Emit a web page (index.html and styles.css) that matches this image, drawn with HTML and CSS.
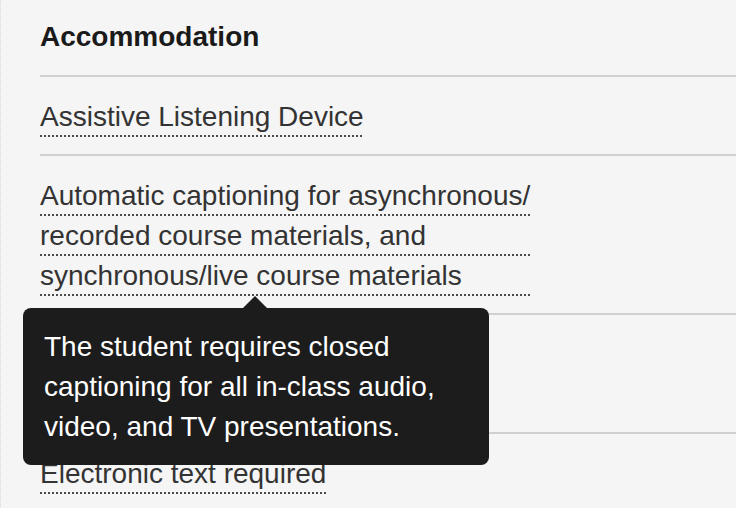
FILE: index.html
```html
<!DOCTYPE html>
<html lang="en">
<head>
<meta charset="utf-8">
<title>Accommodations</title>
<link rel="stylesheet" href="styles.css">
</head>
<body>
<div class="page">
  <div class="table">
    <div class="head">Accommodation</div>
    <div class="row"><span class="term">Assistive Listening Device</span></div>
    <div class="row">
      <span class="term has-tip">Automatic captioning for asynchronous/<br>recorded course materials, and<br>synchronous/live course materials
        <span class="tooltip" role="tooltip">The student requires closed captioning for all in-class audio, video, and TV presentations.</span>
      </span>
    </div>
    <div class="row"><div class="hidden-cell" aria-hidden="true"></div></div>
    <div class="row"><span class="term">Electronic text required</span></div>
  </div>
</div>
</body>
</html>
```

FILE: styles.css
```css
html, body {
  margin: 0;
  padding: 0;
  background: #f5f5f5;
}

body {
  font-family: "Liberation Sans", Arial, Helvetica, sans-serif;
  color: #333333;
}

.page {
  min-height: 100vh;
  box-sizing: border-box;
  border-left: 1px dotted #d9d9d9;
  padding-left: 39px;
  overflow: hidden;
}

.table {
  display: flex;
  flex-direction: column;
}

.head {
  font-size: 28px;
  font-weight: 700;
  line-height: 40px;
  color: #1a1a1a;
  padding: 17px 0 18px;
}

.row {
  border-top: 2px solid #d0d0d0;
  padding: 20px 0 17px;
  font-size: 28px;
  line-height: 40px;
}

.hidden-cell {
  height: 80px;
}

.term {
  display: inline-block;
  vertical-align: top;
  white-space: nowrap;
  color: #333333;
  background-image: conic-gradient(from 180deg at 2px 38px, #4a4a4a 25%, transparent 0);
  background-size: 4px 40px;
  background-repeat: repeat;
}

.has-tip {
  position: relative;
}

.tooltip {
  position: absolute;
  top: calc(100% + 12px);
  left: -17px;
  width: 466px;
  box-sizing: border-box;
  padding: 19px 21px 18px;
  background: #1c1c1c;
  color: #ffffff;
  border-radius: 8px;
  font-size: 28px;
  line-height: 40px;
  white-space: normal;
  z-index: 10;
}

.tooltip::before {
  content: "";
  position: absolute;
  top: -12px;
  left: 220px;
  width: 0;
  height: 0;
  border-left: 12px solid transparent;
  border-right: 12px solid transparent;
  border-bottom: 12px solid #1c1c1c;
}
```
